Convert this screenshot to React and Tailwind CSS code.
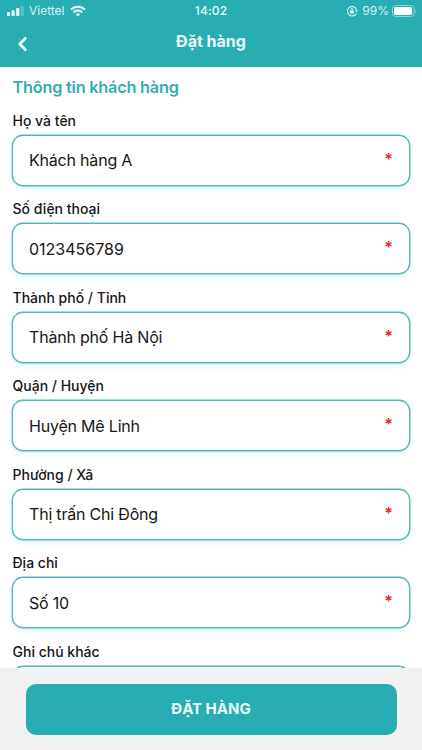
import { useState } from 'react';

const App = () => {
  const [formData, setFormData] = useState({
    name: 'Khách hàng A',
    phone: '0123456789',
    city: 'Thành phố Hà Nội',
    district: 'Huyện Mê Linh',
    ward: 'Thị trấn Chi Đông',
    address: 'Số 10',
    note: '',
  });

  const fields = [
    { key: 'name', label: 'Họ và tên', required: true },
    { key: 'phone', label: 'Số điện thoại', required: true },
    { key: 'city', label: 'Thành phố / Tỉnh', required: true },
    { key: 'district', label: 'Quận / Huyện', required: true },
    { key: 'ward', label: 'Phường / Xã', required: true },
    { key: 'address', label: 'Địa chỉ', required: true },
    { key: 'note', label: 'Ghi chú khác', required: false },
  ];

  return (
    <div className="flex h-[750px] w-[422px] flex-col overflow-hidden bg-white font-['Inter','Liberation_Sans',sans-serif] text-[#161616]">
      <header className="h-[66.5px] shrink-0 bg-[#28adb2] text-[#e9fbfb]">
        <StatusBar />
        <div className="grid h-[42px] grid-cols-[1fr_auto_1fr] items-center">
          <button type="button" aria-label="Quay lại" className="ml-[17px] mt-[2px] w-[11px]">
            <svg viewBox="0 0 11 16" className="h-4 w-[11px]" fill="none" stroke="currentColor" strokeWidth="3" strokeLinecap="round" strokeLinejoin="round">
              <path d="M8.3 2.3 2.8 8l5.5 5.7" />
            </svg>
          </button>
          <h1 className="-mt-[5px] text-[16px] font-bold leading-5">Đặt hàng</h1>
        </div>
      </header>

      {/* Form */}
      <main className="min-h-0 flex-1 overflow-hidden px-3 pt-[9px]">
        <h2 className="pl-[0.5px] text-[16.3px] font-semibold leading-[22px] tracking-[-0.22px] text-[#34acb1]">Thông tin khách hàng</h2>
        <form className="mt-3">
          {fields.map((field) => (
            <label key={field.key} className="block h-[88.6px]">
              <span className="block h-[25px] pl-[0.5px] text-[14px] font-medium leading-[21px]">{field.label}</span>
              <span className="flex h-[51px] items-center rounded-[11px] border border-[#55b5b5] bg-white pl-4 pr-4 shadow-[0_0_0_0.4px_#55b5b5,0_3px_6px_#e2f7fb]">
                <input
                  type="text"
                  value={formData[field.key]}
                  onChange={(e) => setFormData({ ...formData, [field.key]: e.target.value })}
                  className={`min-w-0 flex-1 text-[16px] leading-6 outline-none ${field.key === 'phone' ? '' : 'tracking-[-0.2px]'}`}
                />
                {field.required && <span className="-mt-[3px] text-[16px] font-semibold leading-5 text-[#e5252b]">*</span>}
              </span>
            </label>
          ))}
        </form>
      </main>

      {/* Submit */}
      <footer className="h-[82px] shrink-0 bg-[#f1f1f1] px-[25.5px] pt-[15.5px]">
        <button type="button" className="h-[51px] w-full rounded-[10px] bg-[#28adb2] text-[15px] font-bold text-[#e9fbfb]">
          ĐẶT HÀNG
        </button>
      </footer>
    </div>
  );
};

const StatusBar = () => (
  <div className="grid h-[22px] grid-cols-[1fr_auto_1fr] items-center text-[12px] leading-4">
    <div className="flex items-center pl-[7px]">
      <svg viewBox="0 0 17 10" className="h-[10px] w-[17px]" fill="currentColor">
        <rect x="0" y="6" width="3" height="4" rx="0.8" />
        <rect x="4.5" y="4.3" width="3.2" height="5.7" rx="0.8" />
        <rect x="9.2" y="2" width="3.2" height="8" rx="0.8" />
        <rect x="13.7" y="0" width="3" height="10" rx="0.8" opacity="0.3" />
      </svg>
      <span className="ml-[5px] opacity-90">Viettel</span>
      <svg viewBox="0 0 16 12" className="ml-[5px] h-3 w-4" fill="none" stroke="currentColor" strokeWidth="2.1">
        <path d="M1 4.6a10 10 0 0 1 14 0" />
        <path d="M3.6 7.4a6.2 6.2 0 0 1 8.8 0" />
        <path d="M8 11.6 5.8 9.3a3.2 3.2 0 0 1 4.4 0Z" fill="currentColor" stroke="none" />
      </svg>
    </div>
    <span className="font-medium tracking-[0.15px]">14:02</span>
    <div className="flex items-center justify-end pr-[5px]">
      {/* Rotation lock */}
      <svg viewBox="0 0 12 12" className="h-3 w-3" fill="none" stroke="currentColor" strokeWidth="1.1">
        <path d="M10.3 8.4A4.7 4.7 0 1 1 10.5 4.6" />
        <path d="m8.9 5.3 2.9 0-1.3 2Z" fill="currentColor" stroke="none" />
        <rect x="3.9" y="5.5" width="3.9" height="2.9" rx="0.4" fill="currentColor" stroke="none" />
        <path d="M4.7 5.7V4.6a1.15 1.15 0 0 1 2.3 0v1.1" strokeWidth="0.8" />
      </svg>
      <span className="ml-[4px] opacity-90">99%</span>
      <svg viewBox="0 0 25 12" className="ml-[3px] h-3 w-[25px]">
        <rect x="0.5" y="0.5" width="21.5" height="11" rx="3" fill="none" stroke="currentColor" opacity="0.5" />
        <rect x="2" y="2" width="18" height="8" rx="1.5" fill="#ffffff" />
        <path d="M23.2 4.2c1.6.6 1.6 3 0 3.6Z" fill="currentColor" opacity="0.5" />
      </svg>
    </div>
  </div>
);

export default App;
